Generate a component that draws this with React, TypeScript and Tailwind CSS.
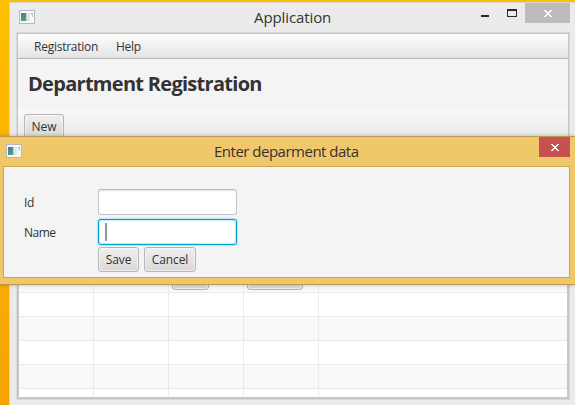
import type { ReactNode } from 'react';

function AppIcon() {
  return (
    <svg width="16" height="14" viewBox="0 0 16 14" shapeRendering="crispEdges">
      <defs>
        <linearGradient id="tile" x1="0" y1="0" x2="0.4" y2="1">
          <stop offset="0" stopColor="#4a74a0" />
          <stop offset="1" stopColor="#50a080" />
        </linearGradient>
      </defs>
      <rect x="0" y="0" width="16" height="14" rx="1" fill="#b4b9be" />
      <rect x="1" y="1" width="14" height="12" fill="#f6f8f9" />
      <rect x="2" y="3" width="5" height="8" fill="url(#tile)" />
      <rect x="7" y="3" width="1" height="8" fill="#c8d6d8" />
      <rect x="8" y="3" width="3" height="8" fill="#e2e4e6" />
      <rect x="12" y="3" width="2" height="2" fill="#a8cbd2" />
      <rect x="13" y="5" width="1" height="2" fill="#a8cfb8" />
    </svg>
  );
}

function CloseGlyph() {
  return (
    <svg width="8" height="7" viewBox="0 0 8 7" shapeRendering="crispEdges" fill="#fff">
      <rect x="0" y="0" width="2" height="1" />
      <rect x="6" y="0" width="2" height="1" />
      <rect x="1" y="1" width="2" height="1" />
      <rect x="5" y="1" width="2" height="1" />
      <rect x="2" y="2" width="4" height="1" />
      <rect x="3" y="3" width="2" height="1" />
      <rect x="2" y="4" width="4" height="1" />
      <rect x="1" y="5" width="2" height="1" />
      <rect x="5" y="5" width="2" height="1" />
      <rect x="0" y="6" width="2" height="1" />
      <rect x="6" y="6" width="2" height="1" />
    </svg>
  );
}

function Button({ className, children }: { className: string; children?: ReactNode }) {
  return (
    <button
      className={
        'flex shrink-0 items-center justify-center rounded-[3px] border border-[#b5b5b5] bg-linear-to-b from-[#efefef] to-[#d9d9d9] text-[12px] leading-4 tracking-[-0.1px] whitespace-nowrap shadow-[inset_0_0_0_1px_rgba(255,255,255,0.5)] ' +
        className
      }
    >
      {children}
    </button>
  );
}

const ROWS = ['h-[25px]', 'h-6', 'h-6', 'h-6', 'h-6', 'h-2'];

function MainWindow() {
  return (
    <div className="ml-[9px] flex h-[403px] w-[566px] flex-col border-t border-l border-[#d6d6d6] bg-[#ebebeb]">
      <div className="flex h-[29px] shrink-0 items-start">
        <div className="mt-[7px] ml-[9px]">
          <AppIcon />
        </div>
        <div className="ml-[219px] w-[86px] pt-[3px] text-[15px] leading-[22px] tracking-[-0.1px]">Application</div>
        <div className="mt-3 ml-[141px] h-[2px] w-2 bg-[#2b2b2b]" />
        <div className="mt-[6px] ml-[18px] h-2 w-[10px] border border-t-2 border-[#2b2b2b]" />
        <div className="ml-2 flex h-5 w-[45px] items-center justify-center bg-[#bcbcbc]">
          <CloseGlyph />
        </div>
      </div>
      <div className="ml-[6px] flex h-[368px] w-[554px] flex-col border border-[#d8d8d8]">
        <div className="flex h-[366px] flex-col border border-[#c6c6c6] bg-[#f4f4f4]">
          <div className="flex h-[25px] shrink-0 items-center border-b border-[#b5b5b5] bg-linear-to-b from-[#fdfdfd] to-[#e4e4e4] pt-px text-[12px] tracking-[-0.25px]">
            <span className="ml-4 w-[82px]">Registration</span>
            <span>Help</span>
          </div>
          <h1 className="h-[50px] shrink-0 pt-[12px] pl-[10px] text-[20px] leading-[26px] font-bold tracking-[-0.71px] text-[#333]">
            Department Registration
          </h1>
          <div className="h-[37px] shrink-0 bg-linear-to-b from-[#fafafa] to-[#e4e4e4] pt-[5px] pl-[6px]">
            <Button className="h-[25px] w-10">New</Button>
          </div>
          <div className="flex grow flex-col justify-end border border-t-0 border-[#c8c8c8] bg-[#f9f9f9]">
            {ROWS.map((height, i) => (
              <div
                key={i}
                className={`flex w-full shrink-0 ${height} ${i < 5 ? 'border-b border-[#ebebeb]' : ''} ${i % 2 || i === 5 ? 'bg-white' : 'bg-[#f9f9f9]'}`}
              >
                <div className="w-[75px] border-r border-[#ebebeb]" />
                <div className="w-[75px] border-r border-[#ebebeb]" />
                <div className="w-[75px] border-r border-[#ebebeb] pl-[3px]">
                  {i === 0 && <Button className="h-[22px] w-[37px]" />}
                </div>
                <div className="w-[75px] border-r border-[#ebebeb] pl-[3px]">
                  {i === 0 && <Button className="h-[22px] w-14" />}
                </div>
              </div>
            ))}
          </div>
        </div>
      </div>
    </div>
  );
}

function Dialog() {
  return (
    <div className="absolute top-[136px] left-0 flex h-[149px] w-[575px] flex-col border-y border-[#b99b50] bg-[#f0c869] shadow-[0_0_4px_rgba(0,0,0,0.25)]">
      <div className="flex h-[29px] shrink-0 items-start">
        <div className="mt-[7px] ml-[6px]">
          <AppIcon />
        </div>
        <div className="ml-[192px] w-[325px] pt-[3px] text-[15px] leading-[22px] tracking-[-0.5px]">Enter deparment data</div>
        <div className="flex h-5 w-[31px] items-center justify-center bg-[#c75050] pl-px">
          <CloseGlyph />
        </div>
      </div>
      <div className="ml-[3px] flex h-[112px] w-[567px] flex-col border border-[#c9a656] bg-[#f4f4f4] pt-[22px] pl-5 text-[12px]">
        <div className="flex h-[26px] shrink-0 items-center">
          <label className="w-[74px] pt-[2px] tracking-[-0.3px]">Id</label>
          <div className="h-[26px] w-[139px] rounded-[3px] border border-[#c4c4c4] border-t-[#b8b8b8] bg-white shadow-[inset_0_2px_2px_-1px_#e4e4e4]" />
        </div>
        <div className="mt-1 flex h-[26px] shrink-0 items-center">
          <label className="w-[74px] pt-[2px] tracking-[-0.5px]">Name</label>
          <div className="flex h-[26px] w-[139px] items-center rounded-[3px] border border-[#039ed3] bg-white pl-[6px] shadow-[0_0_1px_1px_#b5e2f1,inset_0_0_1px_1px_#c8e9f4]">
            <div className="h-[18px] w-[2px] bg-[#999]" />
          </div>
        </div>
        <div className="mt-[2px] flex gap-[5px] pl-[74px]">
          <Button className="h-[25px] w-[41px]">Save</Button>
          <Button className="h-[25px] w-[52px]">Cancel</Button>
        </div>
      </div>
    </div>
  );
}

export default function App() {
  return (
    <div className="relative h-[405px] w-[575px] overflow-hidden bg-linear-to-b from-[#ffbf00] to-[#f5a300] pt-[2px] font-['Open_Sans','Noto_Sans',sans-serif] text-[#333]">
      <MainWindow />
      <Dialog />
    </div>
  );
}
